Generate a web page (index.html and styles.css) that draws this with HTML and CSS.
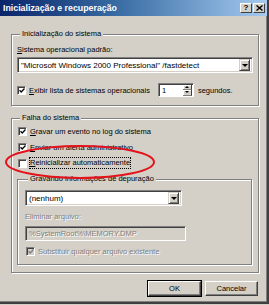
FILE: index.html
```html
<!DOCTYPE html>
<html lang="pt">
<head>
  <meta charset="UTF-8" />
  <title>Inicialização e recuperação</title>
  <link rel="stylesheet" href="styles.css">
</head>
<body>

<div class="window">
  <!-- barra de titulo -->
  <div class="titlebar">
    <span class="title">Inicialização e recuperação</span>
    <div class="title-btns">
      <span class="tbtn">?</span>
      <span class="tbtn">
        <svg width="7" height="6" viewBox="0 0 7 6"><path d="M0.5 0.5 L6.5 5.5 M6.5 0.5 L0.5 5.5" stroke="#000" stroke-width="1.4"/></svg>
      </span>
    </div>
  </div>

  <div class="content">
    <fieldset class="group group-start">
      <legend>Inicialização do sistema</legend>
      <div class="label"><u>S</u>istema operacional padrão:</div>
      <div class="combo combo-os">
        <span class="combo-text">"Microsoft Windows 2000 Professional" /fastdetect</span>
        <span class="drop"><i class="tri"></i></span>
      </div>
      <div class="row row-list">
        <span class="check on"><svg width="7" height="7" viewBox="0 0 7 7"><path d="M0.6 3.2 L2.6 5.3 L6.4 1.2" fill="none" stroke="#000" stroke-width="1.5"/></svg></span>
        <span><u>E</u>xibir lista de sistemas operacionais</span>
        <div class="spin">
          <span class="spin-val">1</span>
          <span class="spin-btns">
            <span class="spin-btn"><i class="tri-up"></i></span>
            <span class="spin-btn"><i class="tri-small"></i></span>
          </span>
        </div>
        <span>segundos.</span>
      </div>
    </fieldset>

    <fieldset class="group group-fail">
      <legend>Falha do sistema</legend>
      <div class="row check-row">
        <span class="check on"><svg width="7" height="7" viewBox="0 0 7 7"><path d="M0.6 3.2 L2.6 5.3 L6.4 1.2" fill="none" stroke="#000" stroke-width="1.5"/></svg></span>
        <span><u>G</u>ravar um evento no log do sistema</span>
      </div>
      <div class="row check-row">
        <span class="check on"><svg width="7" height="7" viewBox="0 0 7 7"><path d="M0.6 3.2 L2.6 5.3 L6.4 1.2" fill="none" stroke="#000" stroke-width="1.5"/></svg></span>
        <span><u>E</u>nviar um alerta administrativo</span>
      </div>
      <div class="row check-row">
        <span class="check"></span>
        <span class="focus"><u>R</u>einicializar automaticamente</span>
      </div>

      <fieldset class="group group-debug">
        <legend>Gravando informações de depuração</legend>
        <div class="combo combo-debug">
          <span class="combo-text">(nenhum)</span>
          <span class="drop"><i class="tri"></i></span>
        </div>
        <div class="label disabled">Eliminar arquivo:</div>
        <div class="edit">%SystemRoot%\MEMORY.DMP</div>
        <div class="row check-row row-disabled">
          <span class="check off"><svg width="7" height="7" viewBox="0 0 7 7"><path d="M0.6 3.2 L2.6 5.3 L6.4 1.2" fill="none" stroke="#808080" stroke-width="1.5"/></svg></span>
          <span class="disabled">Substituir qualquer arquivo existente</span>
        </div>
      </fieldset>
    </fieldset>

    <div class="buttons">
      <button class="btn default">OK</button>
      <button class="btn">Cancelar</button>
    </div>
  </div>

  <!-- marca vermelha por cima -->
  <svg class="circle" width="154" height="38" viewBox="0 0 154 38">
    <ellipse cx="77" cy="19" rx="74" ry="16" fill="none" stroke="#e3121b" stroke-width="2"/>
  </svg>
</div>

</body>
</html>
```

FILE: styles.css
```css
body {
  margin: 0;
  padding: 0;
  background: #d4d0c8;
  font-family: 'Liberation Sans', Arial, sans-serif;
  font-size: 7.5px;
  color: #000;
}

.window {
  position: relative;
  width: 269px;
  height: 304px;
  box-sizing: border-box;
  background: #d4d0c8;
  border-right: 2px solid #404040;
  border-bottom: 2px solid #404040;
  box-shadow: inset -1px -1px 0 #808080;
  overflow: hidden;
}

.titlebar {
  height: 16px;
  display: flex;
  align-items: center;
  justify-content: space-between;
  background: linear-gradient(90deg, #0a246a 0%, #3a6ea5 45%, #a6caf0 100%);
  padding: 0 2px 0 3px;
}

.title {
  color: #fff;
  font-weight: bold;
  font-size: 8.8px;
}

.title-btns {
  display: flex;
  gap: 1px;
}

.tbtn {
  width: 12px;
  height: 10px;
  box-sizing: border-box;
  background: #d4d0c8;
  border-top: 1px solid #fff;
  border-left: 1px solid #fff;
  border-right: 1px solid #404040;
  border-bottom: 1px solid #404040;
  display: flex;
  align-items: center;
  justify-content: center;
  font-weight: bold;
  font-size: 8px;
  line-height: 8px;
}

.content {
  padding: 0 8px 0 11px;
}

/* group box grave */
.group {
  margin: 0;
  padding: 0;
  min-inline-size: 0;
  border: 1px solid #808080;
  box-shadow: inset 1px 1px 0 #fff, 1px 1px 0 #fff;
}

.group legend {
  padding: 0 2px;
  margin-left: 3px;
  line-height: 10px;
  background: #d4d0c8;
}

.group-start {
  margin-top: 13px;
  width: 248px;
  box-sizing: border-box;
  padding: 0 5px 8px 5px;
}

.group-fail {
  margin-top: 7px;
  width: 248px;
  box-sizing: border-box;
  padding: 0 6px 7px 5px;
}

.group-debug {
  margin-top: 3px;
  width: 235px;
  box-sizing: border-box;
  padding: 0 5px 7px 7px;
}

.label {
  line-height: 10px;
  margin-top: 6px;
}

.combo {
  display: flex;
  align-items: center;
  justify-content: space-between;
  height: 16px;
  box-sizing: border-box;
  background: #fff;
  border-top: 1px solid #808080;
  border-left: 1px solid #808080;
  border-right: 1px solid #fff;
  border-bottom: 1px solid #fff;
  box-shadow: inset 1px 1px 0 #404040, inset -1px -1px 0 #d4d0c8;
  padding: 2px 2px 2px 3px;
}

.combo-text {
  font-size: 8px;
}

.combo-os {
  margin-top: 2px;
  width: 236px;
}

.combo-debug {
  margin-top: 6px;
  width: 157px;
}

.drop {
  width: 11px;
  height: 12px;
  box-sizing: border-box;
  background: #d4d0c8;
  border-top: 1px solid #d4d0c8;
  border-left: 1px solid #d4d0c8;
  border-right: 1px solid #404040;
  border-bottom: 1px solid #404040;
  box-shadow: inset 1px 1px 0 #fff, inset -1px -1px 0 #808080;
  display: flex;
  align-items: center;
  justify-content: center;
}

.tri {
  width: 0;
  height: 0;
  border-left: 3px solid transparent;
  border-right: 3px solid transparent;
  border-top: 3px solid #000;
}

.row {
  display: flex;
  align-items: center;
}

.row-list {
  margin-top: 10px;
  height: 14px;
  gap: 0;
}

.row-list .check {
  margin-right: 3px;
}

.check {
  width: 9px;
  height: 9px;
  box-sizing: border-box;
  background: #fff;
  border-top: 1px solid #808080;
  border-left: 1px solid #808080;
  border-right: 1px solid #fff;
  border-bottom: 1px solid #fff;
  box-shadow: inset 1px 1px 0 #404040;
  display: flex;
  align-items: center;
  justify-content: center;
  flex: none;
}

.check svg {
  margin: 1px 0 0 1px;
}

.check.off {
  background: #d4d0c8;
}

.spin {
  display: flex;
  align-items: center;
  width: 36px;
  height: 14px;
  box-sizing: border-box;
  margin: 0 4px 0 8px;
  background: #fff;
  border-top: 1px solid #808080;
  border-left: 1px solid #808080;
  border-right: 1px solid #fff;
  border-bottom: 1px solid #fff;
  box-shadow: inset 1px 1px 0 #404040;
  padding: 1px 1px 1px 3px;
}

.spin-val {
  flex: 1;
}

.spin-btns {
  display: flex;
  flex-direction: column;
  width: 9px;
  height: 11px;
}

.spin-btn {
  flex: 1;
  background: #d4d0c8;
  border-right: 1px solid #404040;
  border-bottom: 1px solid #808080;
  box-shadow: inset 1px 1px 0 #fff;
  display: flex;
  align-items: center;
  justify-content: center;
}

.tri-up {
  width: 0;
  height: 0;
  border-left: 2px solid transparent;
  border-right: 2px solid transparent;
  border-bottom: 2px solid #000;
}

.tri-small {
  width: 0;
  height: 0;
  border-left: 2px solid transparent;
  border-right: 2px solid transparent;
  border-top: 2px solid #000;
}

.check-row {
  height: 16px;
  gap: 3px;
  padding-left: 1px;
}

.focus {
  outline: 1px dotted #000;
  outline-offset: 0;
  line-height: 10px;
}

.disabled {
  color: #808080;
  text-shadow: 1px 1px 0 #fff;
}

.group-debug .label {
  margin-top: 6px;
  padding-left: 0;
}

.edit {
  margin-top: 4px;
  width: 161px;
  height: 15px;
  box-sizing: border-box;
  background: #d4d0c8;
  border-top: 1px solid #808080;
  border-left: 1px solid #808080;
  border-right: 1px solid #fff;
  border-bottom: 1px solid #fff;
  box-shadow: inset 1px 1px 0 #404040;
  color: #808080;
  text-shadow: 1px 1px 0 #fff;
  padding: 0 3px;
  line-height: 13px;
}

.row-disabled {
  margin-top: 4px;
  height: 12px;
}

.buttons {
  display: flex;
  justify-content: flex-end;
  gap: 4px;
  margin-top: 8px;
  padding-right: 1px;
}

.btn {
  width: 53px;
  height: 15px;
  padding: 0;
  box-sizing: border-box;
  font-family: 'Liberation Sans', Arial, sans-serif;
  font-size: 7.5px;
  color: #000;
  background: #d4d0c8;
  border-top: 1px solid #fff;
  border-left: 1px solid #fff;
  border-right: 1px solid #404040;
  border-bottom: 1px solid #404040;
  box-shadow: inset -1px -1px 0 #808080;
}

.btn.default {
  outline: 1px solid #000;
  outline-offset: 0;
  border-color: #fff #404040 #404040 #fff;
}

.circle {
  position: absolute;
  left: 3px;
  top: 143px;
}
```
